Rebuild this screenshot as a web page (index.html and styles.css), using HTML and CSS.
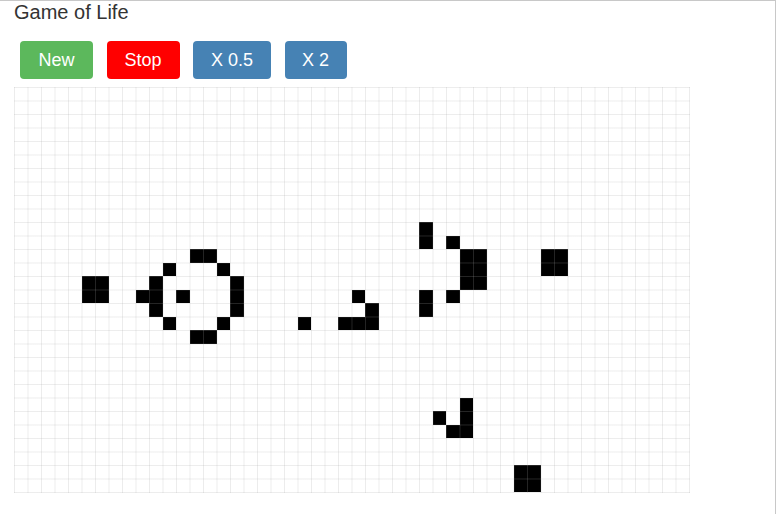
FILE: index.html
```html
<!DOCTYPE html>
<html>
<head>
<meta charset="utf-8">
<title>Game of Life</title>
<link rel="stylesheet" href="styles.css">
</head>
<body>
<div class="frame">
  <h1 class="title">Game of Life</h1>
  <div class="toolbar">
    <button class="btn btn-new">New</button>
    <button class="btn btn-stop">Stop</button>
    <button class="btn btn-speed btn-half">X 0.5</button>
    <button class="btn btn-speed btn-double">X 2</button>
  </div>
  <div class="board">
    <div class="cell" style="grid-area:15/6"></div>
    <div class="cell" style="grid-area:15/7"></div>
    <div class="cell" style="grid-area:16/6"></div>
    <div class="cell" style="grid-area:16/7"></div>

    <div class="cell" style="grid-area:13/14"></div>
    <div class="cell" style="grid-area:13/15"></div>
    <div class="cell" style="grid-area:14/12"></div>
    <div class="cell" style="grid-area:14/16"></div>
    <div class="cell" style="grid-area:15/11"></div>
    <div class="cell" style="grid-area:15/17"></div>
    <div class="cell" style="grid-area:16/10"></div>
    <div class="cell" style="grid-area:16/11"></div>
    <div class="cell" style="grid-area:16/13"></div>
    <div class="cell" style="grid-area:16/17"></div>
    <div class="cell" style="grid-area:17/11"></div>
    <div class="cell" style="grid-area:17/17"></div>
    <div class="cell" style="grid-area:18/12"></div>
    <div class="cell" style="grid-area:18/16"></div>
    <div class="cell" style="grid-area:19/14"></div>
    <div class="cell" style="grid-area:19/15"></div>

    <div class="cell" style="grid-area:18/22"></div>
    <div class="cell" style="grid-area:16/26"></div>
    <div class="cell" style="grid-area:17/27"></div>
    <div class="cell" style="grid-area:18/25"></div>
    <div class="cell" style="grid-area:18/26"></div>
    <div class="cell" style="grid-area:18/27"></div>

    <div class="cell" style="grid-area:11/31"></div>
    <div class="cell" style="grid-area:12/31"></div>
    <div class="cell" style="grid-area:12/33"></div>
    <div class="cell" style="grid-area:13/34"></div>
    <div class="cell" style="grid-area:13/35"></div>
    <div class="cell" style="grid-area:14/34"></div>
    <div class="cell" style="grid-area:14/35"></div>
    <div class="cell" style="grid-area:15/34"></div>
    <div class="cell" style="grid-area:15/35"></div>
    <div class="cell" style="grid-area:16/31"></div>
    <div class="cell" style="grid-area:16/33"></div>
    <div class="cell" style="grid-area:17/31"></div>

    <div class="cell" style="grid-area:13/40"></div>
    <div class="cell" style="grid-area:13/41"></div>
    <div class="cell" style="grid-area:14/40"></div>
    <div class="cell" style="grid-area:14/41"></div>

    <div class="cell" style="grid-area:24/34"></div>
    <div class="cell" style="grid-area:25/32"></div>
    <div class="cell" style="grid-area:25/34"></div>
    <div class="cell" style="grid-area:26/33"></div>
    <div class="cell" style="grid-area:26/34"></div>

    <div class="cell" style="grid-area:29/38"></div>
    <div class="cell" style="grid-area:29/39"></div>
    <div class="cell" style="grid-area:30/38"></div>
    <div class="cell" style="grid-area:30/39"></div>
  </div>
</div>
</body>
</html>
```

FILE: styles.css
```css
html, body {
  margin: 0;
  padding: 0;
  background: #fff;
}

.frame {
  box-sizing: border-box;
  width: 776px;
  height: 514px;
  border-top: 1px solid #c8c8c8;
  border-right: 1px solid #c8c8c8;
  font-family: "Liberation Sans", Arial, sans-serif;
  overflow: hidden;
}

.title {
  margin: 0;
  padding-left: 14px;
  font-size: 20px;
  font-weight: normal;
  line-height: 22px;
  color: #333;
}

.toolbar {
  display: flex;
  gap: 13.5px;
  padding-left: 20px;
  margin-top: 18px;
}

.btn {
  width: 73px;
  height: 38px;
  padding: 0;
  border: none;
  border-radius: 4px;
  font-family: "Liberation Sans", Arial, sans-serif;
  font-size: 18px;
  line-height: 38px;
  text-align: center;
  color: #fff;
  cursor: pointer;
}

.btn-new { background: #5cb85c; }
.btn-stop { background: #ff0000; }
.btn-speed { background: #4682b4; }
.btn-half { width: 78px; }
.btn-double { width: 62px; }

.board {
  position: relative;
  margin: 8px 0 0 14px;
  width: 675px;
  height: 405px;
  display: grid;
  grid-template-columns: repeat(50, 13.5px);
  grid-template-rows: repeat(30, 13.5px);
  background: #fff;
}

.board::after {
  content: "";
  position: absolute;
  top: 0;
  left: 0;
  right: -1px;
  bottom: -1px;
  pointer-events: none;
  background-image:
    linear-gradient(to right, rgba(170,170,170,0.22) 1px, transparent 1px),
    linear-gradient(to bottom, rgba(170,170,170,0.22) 1px, transparent 1px);
  background-size: 13.5px 13.5px;
}

.cell {
  background: #000;
}
```
